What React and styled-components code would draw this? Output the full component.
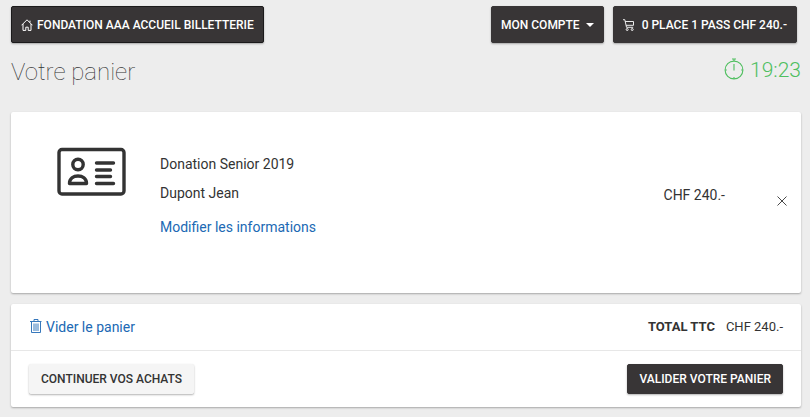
import React from 'react';
import styled, { createGlobalStyle } from 'styled-components';

const GlobalStyle = createGlobalStyle`
    * {
        box-sizing: border-box;
    }
    body {
        margin: 0;
        background: #ededed;
        color: #333;
        font-family: Roboto, "Liberation Sans", sans-serif;
        font-size: 14px;
        line-height: 20px;
    }
`

const Page = styled.div`
    padding: 6px 9px 9px 11px;
`

const NavBar = styled.nav`
    display: flex;
    align-items: center;
    justify-content: space-between;
    padding-right: 4px;
`

const NavRight = styled.div`
    display: flex;
    gap: 9px;
`

const Button = styled.button`
    display: inline-flex;
    align-items: center;
    height: ${({ $small }) => ($small ? '30px' : '37px')};
    padding: 0 ${({ $small }) => ($small ? '11px' : '9px')};
    border: 1px solid ${({ $outlined, $light }) => ($outlined ? '#1b1a1b' : $light ? '#f5f5f5' : '#383536')};
    border-radius: 2px;
    background: ${({ $light }) => ($light ? '#f5f5f5' : '#383536')};
    box-shadow: 0 1px 2px rgba(0, 0, 0, 0.3);
    color: ${({ $light }) => ($light ? '#333' : '#fff')};
    font-family: inherit;
    font-size: 12px;
    line-height: 20px;
    font-weight: 500;
    text-transform: uppercase;
    white-space: nowrap;
    cursor: pointer;
`

const Caret = styled.span`
    margin-left: 6px;
    border-top: 4px solid #fff;
    border-left: 4px solid transparent;
    border-right: 4px solid transparent;
`

const Icon = styled.svg`
    flex: none;
    display: block;
    margin-right: ${({ $gap }) => $gap || 0}px;
    fill: none;
    stroke: currentColor;
`

const Heading = styled.header`
    display: flex;
    justify-content: space-between;
    height: 69px;
    padding-top: 13px;
`

const Title = styled.h1`
    margin: 0;
    font-size: 24px;
    line-height: 32px;
    font-weight: 100;
`

const Timer = styled.div`
    display: flex;
    align-items: center;
    height: 28px;
    color: #4fbf5f;
    font-size: 21px;
    font-weight: 300;
`

const Card = styled.section`
    margin-bottom: 11px;
    border-radius: 2px;
    background: #fff;
    box-shadow: 0 1px 2px rgba(0, 0, 0, 0.3);
`

const Item = styled.div`
    display: flex;
    align-items: flex-start;
    height: 181px;
    padding: 35px 13px 0 46px;
`

const Details = styled.div`
    flex: 1;
    padding: 7px 0 0 33px;
`

const Line = styled.p`
    margin: 0 0 ${({ $gap }) => $gap || 0}px;
`

const Price = styled.span`
    padding: 38px 51px 0 0;
`

const CloseButton = styled.button`
    display: flex;
    margin-top: 48px;
    padding: 0;
    border: 0;
    background: none;
    color: #333;
    cursor: pointer;
`

const Link = styled.a`
    display: inline-flex;
    align-items: center;
    color: #2069b4;
    text-decoration: none;
`

const Row = styled.div`
    display: flex;
    align-items: center;
    justify-content: space-between;
    padding: 13px 18px;
    & + & {
        border-top: 1px solid #e7e7e7;
    }
`

const Total = styled.div`
    display: flex;
    gap: 11px;
    font-size: 13px;
`

const HomeIcon = () => (
    <Icon $gap={4} width="12" height="12" viewBox="0 0 12 12" aria-hidden="true">
        <path d="M0.5 6.3 6 0.8l5.5 5.5M2 5v6.4h2.8V8.2h2.4v3.2H10V5M9 3.4V1.6" />
    </Icon>
)

const CartIcon = () => (
    <Icon $gap={7} width="12" height="12" viewBox="0 0 12 12" strokeWidth="0.9" aria-hidden="true">
        <path d="M0 .7h1.8l1.7 7.6h6.7M2.2 2.5h8.3v3.8H3.1" />
        <circle cx="4.2" cy="10.5" r="1" />
        <circle cx="9.2" cy="10.5" r="1" />
    </Icon>
)

const TimerIcon = () => (
    <Icon $gap={6} width="20" height="24" viewBox="0 0 20 24" strokeWidth="1.1" aria-hidden="true">
        <circle cx="10" cy="12" r="8.9" />
        <path d="M10 3.1V1M8 1h4M10 6v6.500M10 19v1.900M1.100 12h1.700M17.200 12h1.700" />
    </Icon>
)

const PassIcon = () => (
    <Icon width="70" height="49" viewBox="0 0 70 49" strokeWidth="3.4" strokeLinecap="round" strokeLinejoin="round" aria-hidden="true">
        <rect x="2" y="2.500" width="65" height="44.500" rx="3" />
        <circle cx="21" cy="17.500" r="5.200" />
        <path d="M12.500 36.500c0-5 4-7.500 8.500-7.500s8.500 2.500 8.500 7.500zM39.500 16H56.500M39.500 23H53.500M39.500 29.500H53.500M39.500 36.500H56.500" />
    </Icon>
)

const TrashIcon = () => (
    <Icon $gap={4} width="13" height="16" viewBox="-1 0 13 16" strokeWidth="0.9" aria-hidden="true">
        <path d="M0 2.500h11.500M4 2V.5h4V2M1.500 3v10.500h9V3M4 4.500v7.500M6 4.500v7.500M8 4.500v7.500" />
    </Icon>
)

const CloseIcon = () => (
    <Icon width="12" height="12" viewBox="0 0 12 12" strokeWidth="0.9" aria-hidden="true">
        <path d="M1.500 1.500l9 9M10.500 1.500l-9 9" />
    </Icon>
)

const App = () => {
    return (
        <>
            <GlobalStyle />
            <Page>
                <NavBar>
                    <Button $outlined><HomeIcon />Fondation AAA Accueil billetterie</Button>
                    <NavRight>
                        <Button>Mon compte<Caret /></Button>
                        <Button><CartIcon />0 place 1 pass CHF 240.-</Button>
                    </NavRight>
                </NavBar>

                <Heading>
                    <Title>Votre panier</Title>
                    <Timer><TimerIcon />19:23</Timer>
                </Heading>

                <Card>
                    <Item>
                        <PassIcon />
                        <Details>
                            <Line $gap={9}>Donation Senior 2019</Line>
                            <Line $gap={14}>Dupont Jean</Line>
                            <Link href="#informations">Modifier les informations</Link>
                        </Details>
                        <Price>CHF 240.-</Price>
                        <CloseButton aria-label="Supprimer"><CloseIcon /></CloseButton>
                    </Item>
                </Card>

                <Card>
                    <Row>
                        <Link href="#vider"><TrashIcon />Vider le panier</Link>
                        <Total><strong>TOTAL TTC</strong><span>CHF 240.-</span></Total>
                    </Row>
                    <Row>
                        <Button $small $light>Continuer vos achats</Button>
                        <Button $small>Valider votre panier</Button>
                    </Row>
                </Card>
            </Page>
        </>
    )
}

export default App
